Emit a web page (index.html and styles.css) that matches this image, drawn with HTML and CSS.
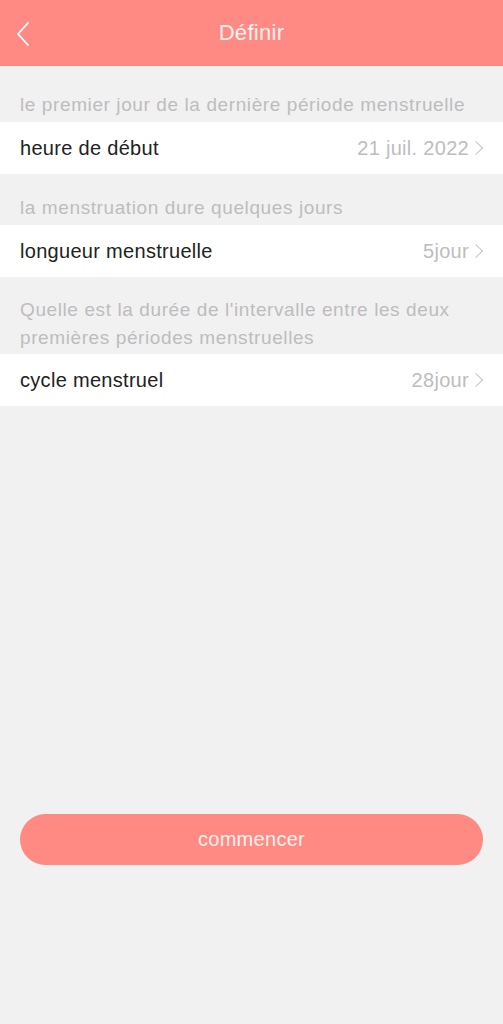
FILE: index.html
```html
<!DOCTYPE html>
<html lang="fr">
	<head>
		<meta charset="utf-8">
		<link rel="stylesheet" href="styles.css">
	</head>
	<body>
		<div class="page">
			<div class="header">
				<a href="#" class="back">
					<svg width="16" height="26" viewBox="0 0 16 26"><path d="M13 2 L3 13 L13 24" fill="none" stroke="#fff" stroke-width="1.8" stroke-linecap="round" stroke-linejoin="round"/></svg>
				</a>
				<h1 class="title">Définir</h1>
			</div>

			<p class="label first">le premier jour de la dernière période menstruelle</p>
			<div class="row">
				<span class="name">heure de début</span>
				<span class="value">21 juil. 2022<i class="arrow"></i></span>
			</div>

			<p class="label">la menstruation dure quelques jours</p>
			<div class="row">
				<span class="name">longueur menstruelle</span>
				<span class="value">5jour<i class="arrow"></i></span>
			</div>

			<p class="label two-lines">Quelle est la durée de l'intervalle entre les deux premières périodes menstruelles</p>
			<div class="row">
				<span class="name">cycle menstruel</span>
				<span class="value">28jour<i class="arrow"></i></span>
			</div>

			<div class="footer">
				<button class="start">commencer</button>
			</div>
		</div>
	</body>
</html>
```

FILE: styles.css
```css
*, *::before, *::after {
	margin: 0;
	padding: 0;
	box-sizing: border-box;
}
body {
	background-color: #f1f1f1;
	font-family: "Liberation Sans", Arial, sans-serif;
}
.page {
	display: flex;
	flex-direction: column;
	min-height: 1024px;
}
.header {
	position: relative;
	height: 66px;
	background-color: #ff8a84;
	display: flex;
	align-items: center;
	justify-content: center;
}
.back {
	position: absolute;
	left: 15px;
	top: 21px;
	display: block;
	width: 16px;
	height: 26px;
}
.title {
	font-size: 22px;
	font-weight: normal;
	letter-spacing: 0.3px;
	color: #fff3ef;
}
.label {
	padding: 20px 20px 3px;
	font-size: 19px;
	line-height: 28px;
	letter-spacing: 0.6px;
	color: #bdbdbd;
	white-space: nowrap;
}
.label.first {
	padding-top: 25px;
}
.label.two-lines {
	white-space: normal;
	padding-top: 19px;
	padding-bottom: 2px;
	padding-right: 40px;
}
.row {
	height: 52px;
	background-color: #fff;
	display: flex;
	align-items: center;
	justify-content: space-between;
	padding: 0 19px 0 20px;
	font-size: 20px;
	letter-spacing: 0.3px;
}
.name {
	color: #222;
}
.value {
	color: #bdbdbd;
	display: flex;
	align-items: center;
}
.arrow {
	display: inline-block;
	width: 10px;
	height: 10px;
	border-top: 1.5px solid #c4c4c4;
	border-right: 1.5px solid #c4c4c4;
	transform: rotate(45deg);
	margin-left: 2px;
	margin-right: 3px;
}
.footer {
	padding: 408px 20px 0;
}
.start {
	width: 100%;
	height: 51px;
	border: none;
	border-radius: 26px;
	background-color: #ff8a84;
	color: #fff1ee;
	font-family: "Liberation Sans", Arial, sans-serif;
	font-size: 20px;
	letter-spacing: 0.3px;
}
```
